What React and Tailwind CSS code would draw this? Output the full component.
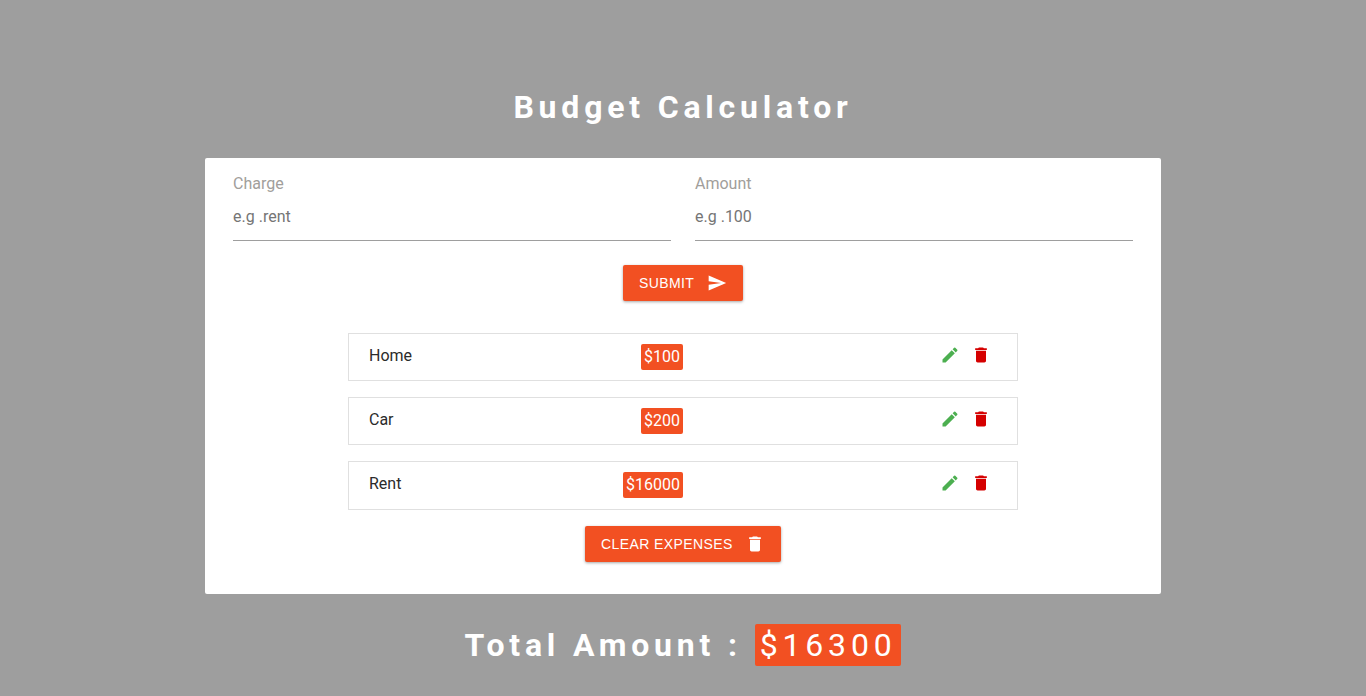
import React from "react";
import { MdSend, MdEdit, MdDelete } from "react-icons/md";

const expenses = [
  { id: 1, charge: "Home", amount: 100, h: "h-12" },
  { id: 2, charge: "Car", amount: 200, h: "h-12" },
  { id: 3, charge: "Rent", amount: 16000, h: "h-[49px]" },
];

function Field({ label, placeholder }) {
  return (
    <div className="flex-1">
      <label className="block text-[16px] leading-[19px] text-[#a19e9b] mt-[16px]">{label}</label>
      <input
        placeholder={placeholder}
        className="block w-full h-[48px] text-[16px] border-b border-[#9e9e9e] outline-none placeholder:text-[#757575]"
      />
    </div>
  );
}

function Item({ expense }) {
  return (
    <li className={`flex border border-[#e0e0e0] ${expense.h}`}>
      <div className="w-[334px] flex items-start pl-[20px] pr-0 pt-[10px]">
        <span className="flex-1 mt-[2px] text-[16px] leading-[19px] text-[#2b2b2b]">{expense.charge}</span>
        <span className="rounded-[2px] bg-[#f25022] text-white text-[16px] leading-[26px] px-[3px]">${expense.amount}</span>
      </div>
      <div className="flex-1 flex items-start justify-end pr-[26px] pt-[11px] gap-[11px]">
        <MdEdit className="text-[#4caf50]" size={20} />
        <MdDelete className="text-[#d50000]" size={20} />
      </div>
    </li>
  );
}

function Button({ children, icon, className }) {
  return (
    <button className={`h-9 px-4 flex items-center justify-between rounded-[2px] bg-[#f25022] text-white text-[14px] tracking-[0.4px] uppercase font-['Liberation_Sans',Arial,sans-serif] shadow-[0_1px_3px_rgba(0,0,0,0.35)] ${className}`}>
      {children}
      {icon}
    </button>
  );
}

export default function App() {
  const total = expenses.reduce((sum, e) => sum + e.amount, 0);

  return (
    <div className="min-h-[696px] bg-[#9e9e9e] font-['Roboto',sans-serif] flex flex-col items-center">
      <h1 className="mt-[85px] text-[32px] leading-[44px] font-bold tracking-[4.8px] text-white">Budget Calculator</h1>
      <main className="mt-[29px] w-[956px] h-[436px] rounded-[2px] bg-white px-[28px]">
        <form onSubmit={(e) => e.preventDefault()}>
          <div className="flex gap-6">
            <Field label="Charge" placeholder="e.g .rent" />
            <Field label="Amount" placeholder="e.g .100" />
          </div>
          <div className="flex justify-center mt-6">
            <Button className="w-[120px]" icon={<MdSend size={20} />}>Submit</Button>
          </div>
        </form>
        <ul className="mt-8 mx-auto w-[670px] flex flex-col gap-4">
          {expenses.map((e) => (
            <Item key={e.id} expense={e} />
          ))}
        </ul>
        <div className="flex justify-center mt-4">
          <Button className="w-[196px]" icon={<MdDelete size={20} />}>Clear Expenses</Button>
        </div>
      </main>
      <h2 className="mt-[30px] flex items-center text-[32px] leading-[42px] tracking-[4.8px] text-white font-bold">
        Total Amount :
        <span className="ml-[13px] rounded-[2px] bg-[#f25022] px-[5px] font-normal">${total}</span>
      </h2>
    </div>
  );
}
